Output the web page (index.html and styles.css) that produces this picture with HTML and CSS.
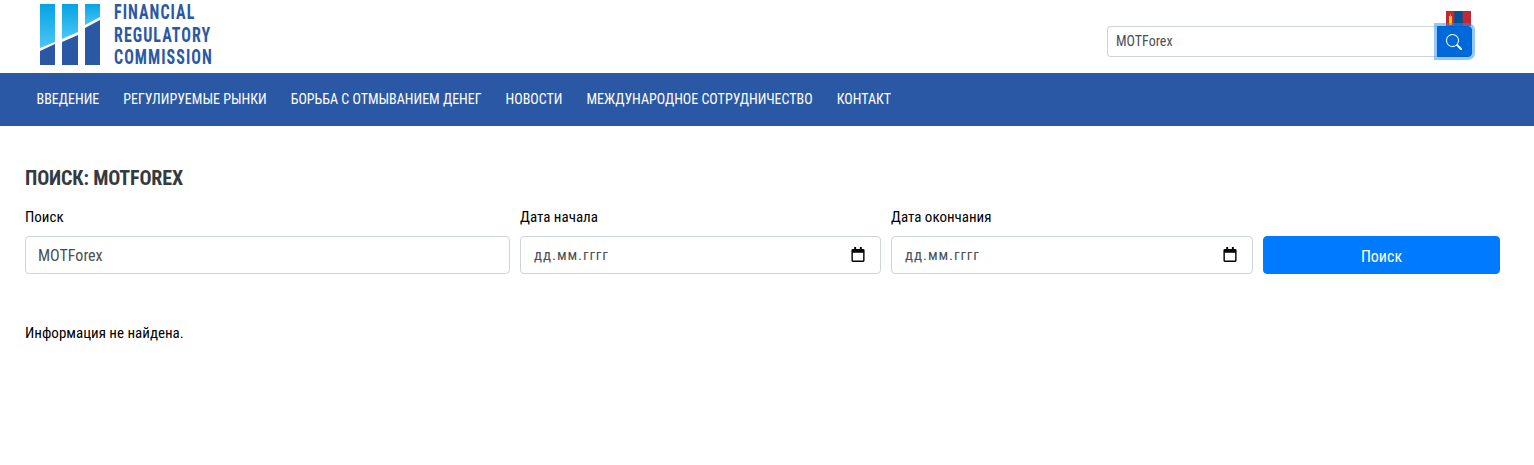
FILE: index.html
```html
<!DOCTYPE html>
<html lang="ru">
<head>
<meta charset="utf-8">
<title>Поиск: MOTForex</title>
<link rel="stylesheet" href="styles.css">
</head>
<body>
<header class="top">
  <a class="logo" href="#">
    <svg class="logo-mark" width="60" height="61" viewBox="0 0 60 61">
      <defs>
        <linearGradient id="sky" x1="0" y1="0" x2="0" y2="1">
          <stop offset="0" stop-color="#05a3e4"/>
          <stop offset="1" stop-color="#4cc6f4"/>
        </linearGradient>
      </defs>
      <polygon points="0,0 15,0 15,38 0,44" fill="url(#sky)"/>
      <polygon points="22,0 38,0 38,28 22,35" fill="url(#sky)"/>
      <polygon points="45,0 60,0 60,13 45,21" fill="url(#sky)"/>
      <polygon points="0,47 15,40 15,61 0,61" fill="#2a58a5"/>
      <polygon points="22,38 38,31 38,61 22,61" fill="#2a58a5"/>
      <polygon points="45,24 60,16 60,61 45,61" fill="#2a58a5"/>
    </svg>
    <span class="logo-text"><span>FINANCIAL</span><span>REGULATORY</span><span>COMMISSION</span></span>
  </a>
  <div class="tools">
    <svg class="flag" width="25" height="15" viewBox="0 0 25 15">
      <rect width="25" height="15" fill="#c4272f"/>
      <rect x="8.3" width="8.4" height="15" fill="#015197"/>
      <rect x="3" y="5" width="3" height="9" fill="#f9cf02"/>
      <rect x="4" y="3" width="1" height="3" fill="#e8891c"/>
    </svg>
    <form class="top-search">
      <input class="top-input" type="text" value="MOTForex">
      <button class="top-button" type="button" aria-label="Поиск">
        <svg width="16" height="16" viewBox="0 0 16 16" fill="#fff"><path d="M11.742 10.344a6.5 6.5 0 1 0-1.397 1.398h-.001q.044.06.098.115l3.850 3.850a1 1 0 0 0 1.415-1.414l-3.850-3.850a1 1 0 0 0-.115-.1zM12 6.500a5.500 5.500 0 1 1-11 0 5.500 5.500 0 0 1 11 0"/></svg>
      </button>
    </form>
  </div>
</header>
<nav class="nav">
  <a href="#">ВВЕДЕНИЕ</a>
  <a href="#">РЕГУЛИРУЕМЫЕ РЫНКИ</a>
  <a href="#">БОРЬБА С ОТМЫВАНИЕМ ДЕНЕГ</a>
  <a href="#">НОВОСТИ</a>
  <a href="#">МЕЖДУНАРОДНОЕ СОТРУДНИЧЕСТВО</a>
  <a href="#">КОНТАКТ</a>
</nav>
<main class="content">
  <h1 class="title">ПОИСК: MOTFOREX</h1>
  <form class="filters">
    <div class="field">
      <label class="label">Поиск</label>
      <input class="control" type="text" value="MOTForex">
    </div>
    <div class="field">
      <label class="label">Дата начала</label>
      <div class="date">
        <input class="control mono" type="text" value="дд.мм.гггг">
        <svg class="cal" width="14" height="15" viewBox="0 0 14 16"><path d="M3 0h2v2h4V0h2v2h1.500A1.500 1.500 0 0 1 14 3.500v11a1.500 1.500 0 0 1-1.500 1.500h-11A1.500 1.500 0 0 1 0 14.500v-11A1.500 1.500 0 0 1 1.500 2H3zM1.500 6v8.500h11V6z"/></svg>
      </div>
    </div>
    <div class="field">
      <label class="label">Дата окончания</label>
      <div class="date">
        <input class="control mono" type="text" value="дд.мм.гггг">
        <svg class="cal" width="14" height="15" viewBox="0 0 14 16"><path d="M3 0h2v2h4V0h2v2h1.500A1.500 1.500 0 0 1 14 3.500v11a1.500 1.500 0 0 1-1.500 1.500h-11A1.500 1.500 0 0 1 0 14.500v-11A1.500 1.500 0 0 1 1.500 2H3zM1.500 6v8.500h11V6z"/></svg>
      </div>
    </div>
    <button class="submit" type="button">Поиск</button>
  </form>
  <p class="empty">Информация не найдена.</p>
</main>
</body>
</html>
```
FILE: styles.css
```css
* { box-sizing: border-box; }
html, body { margin: 0; padding: 0; }
body {
  background: #fff;
  color: #000;
  font-family: "Roboto Condensed", Roboto, sans-serif;
  font-stretch: condensed;
  font-size: 15px;
  height: 465px;
  overflow: hidden;
}
.top {
  height: 73px;
  display: flex;
  justify-content: space-between;
  padding: 4px 62px 0 40px;
}
.logo {
  display: flex;
  gap: 14px;
  text-decoration: none;
}
.logo-mark { display: block; }
.logo-text {
  display: flex;
  flex-direction: column;
  color: #2a58a5;
  font-size: 20px;
  font-weight: 700;
  line-height: 22.500px;
  letter-spacing: 1.300px;
  margin-top: -3px;
  width: 130px;
  transform: scaleX(.8);
  transform-origin: left top;
}
.tools {
  display: flex;
  flex-direction: column;
  align-items: flex-end;
  padding-top: 7px;
}
.flag { display: block; margin-right: 1px; }
.top-search {
  display: flex;
  height: 31px;
}
.top-input {
  width: 330px;
  height: 31px;
  border: 1px solid #ced4da;
  border-right: 0;
  border-radius: 4px 0 0 4px;
  padding: 0 9px 2px 8px;
  font: inherit;
  font-size: 14px;
  font-stretch: condensed;
  color: #495057;
}
.top-button {
  width: 35px;
  height: 31px;
  padding: 0 2px 0 0;
  display: flex;
  align-items: center;
  justify-content: center;
  background: #0069d9;
  border: 1px solid #0062cc;
  border-radius: 0 4px 4px 0;
  box-shadow: 0 0 0 3px rgba(38, 143, 255, .5);
}
.nav {
  height: 53px;
  display: flex;
  align-items: center;
  gap: 24px;
  padding: 0 0 2px 36.500px;
  background: #2a58a5;
}
.nav a {
  color: #fff;
  font-size: 14px;
  font-weight: 400;
  text-decoration: none;
}
.content { padding: 41px 34px 0 25px; }
.title {
  margin: 0 0 16px;
  color: #343a40;
  font-size: 20px;
  font-weight: 700;
  letter-spacing: -.150px;
  line-height: 23px;
  padding-bottom: 1px;
}
.filters {
  display: grid;
  grid-template-columns: 485px 361px 362px 237px;
  column-gap: 10px;
  align-items: end;
}
.label {
  display: block;
  margin-bottom: 9px;
  line-height: 20px;
}
.date { position: relative; }
.control {
  display: block;
  width: 100%;
  height: 38px;
  padding: 0 12px;
  border: 1px solid #ced4da;
  border-radius: 4px;
  color: #495057;
  background: #fff;
  font: inherit;
  font-size: 16px;
  font-stretch: condensed;
}
.mono { letter-spacing: .900px; font-size: 15px; padding-left: 13px; }
.cal {
  position: absolute;
  right: 16px;
  top: 11px;
}
.submit {
  height: 38px;
  border: 1px solid #007bff;
  border-radius: 4px;
  background: #007bff;
  color: #fff;
  font: inherit;
  font-size: 16px;
  font-stretch: condensed;
  font-weight: 400;
  padding-top: 4px;
}
.empty {
  margin: 49px 0 0;
  line-height: 20px;
}
```
